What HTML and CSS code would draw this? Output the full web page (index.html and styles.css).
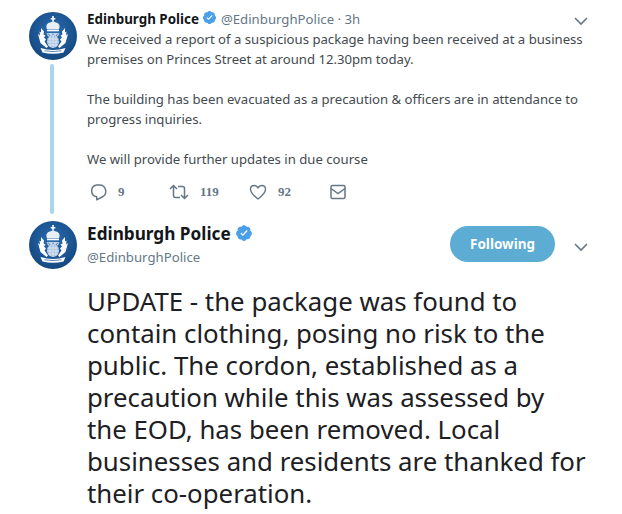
FILE: index.html
```html
<!DOCTYPE html>
<html lang="en">
<head>
  <meta charset="UTF-8">
  <meta name="viewport" content="width=device-width, initial-scale=1.0">
  <title>Tweet</title>
  <link rel="stylesheet" href="styles.css">
</head>

<body>

  <svg class="icon-defs" width="0" height="0">
    <defs>
      <radialGradient id="crest-bg" cx="50%" cy="40%" r="60%">
        <stop offset="0" stop-color="#2a6db5"/>
        <stop offset="1" stop-color="#14487f"/>
      </radialGradient>
      <symbol id="crest" viewBox="0 0 48 48">
        <circle cx="24" cy="24" r="24" fill="url(#crest-bg)"/>
        <path d="M23.200 4h1.600v2h1.500v1.400h-1.500v2h-1.600v-2h-1.500v-1.400h1.500z" fill="#fff"/>
        <path d="M18 17c-1.500-3 0-6 3-6.500l3-1.300 3 1.300c3 .5 4.500 3.500 3 6.500z" fill="#e8eff7"/>
        <path d="M18 17.500h12v1.800H18z" fill="#fff"/>
        <path d="M17.500 21h13l-1.500 3.500h-10z" fill="#c4d6ea"/>
        <path d="M19 21.500l2 2.500M24 21.500v2.500M29 21.500l-2 2.500" stroke="#1f5c9e" stroke-width=".7"/>
        <ellipse cx="24" cy="29.500" rx="6" ry="6.500" fill="#a9c4e0"/>
        <path d="M18.500 27h11M18 30h12M19 33h10M21 24v11M24 23v13M27 24v11" stroke="#e9f1f8" stroke-width=".7"/>
        <path d="M12 16l3 3.500-.5 3 2 1-1.500 2 2 2-1.500 2 3.500 5-1.500 1.500-6-5-2.500-9 2 1.500-.5-4 1.500 1z" fill="#fff"/>
        <path d="M36 16l-3 3.500.5 3-2 1 1.500 2-2 2 1.500 2-3.500 5 1.500 1.500 6-5 2.500-9-2 1.500.5-4-1.500 1z" fill="#fff"/>
        <path d="M11.500 36q12.500 4 25 0l-2 4.500q-10.500 2.500-21 0z" fill="#fff"/>
        <path d="M15.500 38.800q8.500 1.500 17 0" stroke="#5f8cbd" stroke-width="1" fill="none"/>
      </symbol>
      <symbol id="verified" viewBox="0 0 24 24">
        <path d="M22.500 12.500c0-1.580-.875-2.950-2.150-3.600.154-.435.238-.905.238-1.400 0-2.210-1.710-3.998-3.818-3.998-.47 0-.92.084-1.336.25C14.818 2.415 13.510 1.500 12 1.500s-2.816.917-3.437 2.250c-.415-.165-.866-.25-1.336-.25-2.110 0-3.818 1.790-3.818 4 0 .494.083.964.237 1.400-1.272.65-2.147 2.018-2.147 3.600 0 1.495.782 2.798 1.942 3.486-.02.17-.032.34-.032.514 0 2.210 1.708 4 3.818 4 .47 0 .92-.086 1.335-.25.62 1.334 1.926 2.250 3.437 2.250 1.512 0 2.818-.916 3.437-2.250.415.163.865.248 1.336.248 2.110 0 3.818-1.790 3.818-4 0-.174-.012-.344-.033-.513 1.158-.687 1.943-1.990 1.943-3.484z" fill="#4a9fe9"/>
        <path d="M10.500 16l-3.300-3.300 1.200-1.200 2 2 5.200-5.500 1.300 1.200z" fill="#fff"/>
      </symbol>
      <symbol id="caret" viewBox="0 0 16 10">
        <path d="M2 2l6 6 6-6" fill="none" stroke="currentColor" stroke-width="1.600"/>
      </symbol>
    </defs>
  </svg>

  <!-- Parent tweet -->
  <div class="tweet">
    <div class="tweet-side">
      <svg class="avatar"><use href="#crest"/></svg>
      <div class="thread-line"></div>
    </div>
    <div class="tweet-main">
      <div class="tweet-header">
        <b class="tweet-name">Edinburgh Police</b>
        <svg class="badge"><use href="#verified"/></svg>
        <span class="tweet-meta">@EdinburghPolice · 3h</span>
        <svg class="caret"><use href="#caret"/></svg>
      </div>
      <p class="tweet-text">We received a report of a suspicious package having been received at a business premises on Princes Street at around 12.30pm today.</p>
      <p class="tweet-text">The building has been evacuated as a precaution &amp; officers are in attendance to progress inquiries.</p>
      <p class="tweet-text">We will provide further updates in due course</p>
      <div class="tweet-actions">
        <div class="action action-reply">
          <svg viewBox="0 0 18 18"><path d="M7.500 2h3a6.300 6.300 0 0 1 2.600 12L7.700 16.800v-3A6 6 0 0 1 7.500 2z" fill="none" stroke="currentColor" stroke-width="1.500" stroke-linejoin="round"/></svg>
          <span>9</span>
        </div>
        <div class="action action-retweet">
          <svg viewBox="0 0 20 18"><path d="M1 6l3.500-3.500L8 6M4.500 3v9.500a2 2 0 0 0 2 2H11M19 12l-3.500 3.500L12 12M15.500 15V5.500a2 2 0 0 0-2-2H9" fill="none" stroke="currentColor" stroke-width="1.500"/></svg>
          <span>119</span>
        </div>
        <div class="action action-like">
          <svg viewBox="0 0 18 18"><path d="M9 16C5 13 1.500 10 1.500 6.300 1.500 4 3.200 2.500 5.100 2.500 6.800 2.500 8.300 3.500 9 5c.7-1.500 2.200-2.500 3.900-2.500 1.900 0 3.600 1.500 3.600 3.800C16.500 10 13 13 9 16z" fill="none" stroke="currentColor" stroke-width="1.400" stroke-linejoin="round"/></svg>
          <span>92</span>
        </div>
        <div class="action">
          <svg viewBox="0 0 18 18"><rect x="2" y="2.500" width="14" height="13" rx="1.500" fill="none" stroke="currentColor" stroke-width="1.500"/><path d="M2 5.500l7 5 7-5" fill="none" stroke="currentColor" stroke-width="1.500"/></svg>
        </div>
      </div>
    </div>
  </div>

  <!-- Permalink tweet -->
  <div class="permalink">
    <div class="permalink-header">
      <svg class="avatar"><use href="#crest"/></svg>
      <div class="permalink-user">
        <div class="permalink-name">
          <b>Edinburgh Police</b>
          <svg class="badge-large"><use href="#verified"/></svg>
        </div>
        <span class="permalink-handle">@EdinburghPolice</span>
      </div>
      <button class="follow-button">Following</button>
      <svg class="caret-large"><use href="#caret"/></svg>
    </div>
    <p class="permalink-text">UPDATE - the package was found to contain clothing, posing no risk to the public. The cordon, established as a precaution while this was assessed by the EOD, has been removed. Local businesses and residents are thanked for their co-operation.</p>
  </div>

</body>
</html>
```

FILE: styles.css
```css
/* Global Styles */
body {
  font-family: 'Noto Sans', 'Open Sans', sans-serif;
  margin: 0;
  padding: 0;
  background-color: #fff;
  color: #14171a;
  overflow: hidden;
}

.icon-defs {
  position: absolute;
}

.avatar {
  display: block;
  width: 48px;
  height: 48px;
  flex: none;
}

/* Parent tweet */
.tweet {
  display: flex;
  padding: 12px 32px 0 29px;
}

.tweet-side {
  width: 48px;
  margin-right: 10px;
}

.thread-line {
  width: 4px;
  height: 150px;
  margin: 4px 0 0 21px;
  border-radius: 2px;
  background-color: #a9d6ec;
}

.tweet-main {
  flex: 1;
}

.tweet-header {
  display: flex;
  align-items: center;
  height: 14px;
  font-size: 13.400px;
}

.tweet-name {
  font-weight: 700;
}

.badge {
  width: 15px;
  height: 15px;
  margin: -3px 4px 0 3px;
}

.tweet-meta {
  color: #657786;
  font-size: 13.200px;
}

.caret {
  width: 16px;
  height: 10px;
  margin-left: auto;
  margin-top: 3px;
  margin-right: 1px;
  color: #657786;
}

.tweet-text {
  margin: 0 0 20px;
  font-size: 13.150px;
  line-height: 20px;
  color: #434a50;
}

.tweet-header + .tweet-text {
  margin-top: 3px;
}

.tweet-actions {
  display: flex;
  align-items: center;
  margin-top: -7px;
  height: 20px;
  color: #657786;
  font-family: 'Liberation Serif', serif;
  font-size: 13px;
  font-weight: 700;
}

.action {
  display: flex;
  align-items: center;
  gap: 11px;
}

.action svg {
  width: 18px;
  height: 18px;
}

.action-reply {
  margin-left: 2px;
  width: 80px;
}

.action-retweet {
  width: 80px;
}

.action-retweet svg {
  width: 20px;
}

.action-like {
  width: 80px;
}

/* Permalink tweet */
.permalink {
  padding: 7px 32px 0 29px;
}

.permalink-header {
  display: flex;
  align-items: center;
}

.permalink-user {
  margin-left: 10px;
  flex: 1;
}

.permalink-name {
  display: flex;
  align-items: center;
  margin-top: -2px;
  font-size: 17.200px;
  line-height: 22px;
}

.badge-large {
  width: 18px;
  height: 18px;
  margin-left: 4px;
  margin-top: -2px;
}

.permalink-handle {
  display: block;
  margin-top: 3px;
  font-size: 13.200px;
  color: #657786;
}

.follow-button {
  width: 105px;
  height: 36px;
  margin-top: -3px;
  border: none;
  border-radius: 18px;
  background-color: #5cacd3;
  color: #fff;
  font-family: inherit;
  font-size: 13.500px;
  font-weight: 700;
}

.caret-large {
  width: 16px;
  height: 10px;
  margin-left: 18px;
  margin-right: 1px;
  margin-top: 4px;
  color: #657786;
}

.permalink-text {
  margin: 16px 0 0 58px;
  font-size: 25.800px;
  line-height: 32px;
  color: #1c2024;
}
```
